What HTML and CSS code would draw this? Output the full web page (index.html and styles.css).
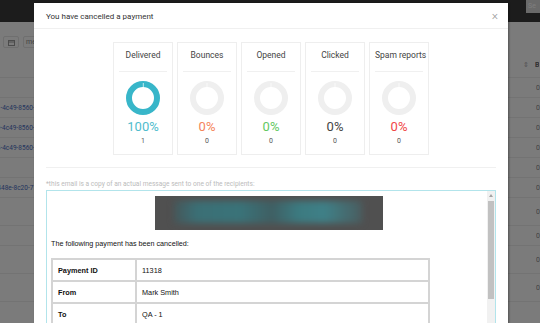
FILE: index.html
```html
<!DOCTYPE html>
<html lang="en">
<head>
<meta charset="UTF-8">
<title>Payment cancelled</title>
<link rel="stylesheet" href="styles.css">
</head>
<body>
<div class="page">
  <div class="topbar"><span class="topbar-btn">Se</span></div>
  <div class="toolbar">
    <span class="tool-btn">
      <svg width="7" height="7" viewBox="0 0 7 7"><rect x="0.5" y="1.5" width="6" height="5" fill="none" stroke="#999" stroke-width="1"/><line x1="0.5" y1="3" x2="6.5" y2="3" stroke="#999"/></svg>
    </span>
    <span class="tool-btn wide">me</span>
  </div>
  <div class="list">
    <div class="list-head"><span class="sort">&#8661;</span><span class="head-b">B</span></div>
    <div class="list-row"><span class="id"></span><span class="num">0</span></div>
    <div class="list-row"><span class="id">b7e1-4c49-8560-9d3c</span><span class="num">0</span></div>
    <div class="list-row"><span class="id">c2a0-4c49-8560-1f7e</span><span class="num">0</span></div>
    <div class="list-row"><span class="id">e9d4-4c49-8560-3b2a</span><span class="num">0</span></div>
    <div class="list-row"><span class="id"></span><span class="num">0</span></div>
    <div class="list-row"><span class="id">f13-448e-8c20-77a1</span><span class="num">0</span></div>
    <div class="list-row tall"><span class="id"></span><span class="num">0</span></div>
    <div class="list-row"><span class="id"></span><span class="num">0</span></div>
    <div class="list-row tall"><span class="id"></span><span class="num">0</span></div>
    <div class="list-row tall"><span class="id"></span><span class="num">0</span></div>
  </div>
</div>
<div class="backdrop"></div>

<div class="modal">
  <div class="modal-header">
    <span class="modal-title">You have cancelled a payment</span>
    <span class="modal-close">&#215;</span>
  </div>
  <div class="modal-body">
    <div class="stats">
      <div class="stat">
        <div class="stat-title">Delivered</div>
        <svg class="donut" width="34" height="34" viewBox="0 0 34 34"><circle cx="17" cy="17" r="14" fill="none" stroke="#38b6c9" stroke-width="6"/><line x1="17.3" y1="2" x2="17.3" y2="7" stroke="#fff" stroke-width="0.7"/></svg>
        <div class="stat-pct teal">100%</div>
        <div class="stat-count">1</div>
      </div>
      <div class="stat">
        <div class="stat-title">Bounces</div>
        <svg class="donut" width="34" height="34" viewBox="0 0 34 34"><circle cx="17" cy="17" r="14" fill="none" stroke="#efefef" stroke-width="6"/><line x1="17" y1="2" x2="17" y2="7" stroke="#fff" stroke-width="0.7"/></svg>
        <div class="stat-pct orange">0%</div>
        <div class="stat-count">0</div>
      </div>
      <div class="stat">
        <div class="stat-title">Opened</div>
        <svg class="donut" width="34" height="34" viewBox="0 0 34 34"><circle cx="17" cy="17" r="14" fill="none" stroke="#efefef" stroke-width="6"/><line x1="17" y1="2" x2="17" y2="7" stroke="#fff" stroke-width="0.7"/></svg>
        <div class="stat-pct green">0%</div>
        <div class="stat-count">0</div>
      </div>
      <div class="stat">
        <div class="stat-title">Clicked</div>
        <svg class="donut" width="34" height="34" viewBox="0 0 34 34"><circle cx="17" cy="17" r="14" fill="none" stroke="#efefef" stroke-width="6"/><line x1="17" y1="2" x2="17" y2="7" stroke="#fff" stroke-width="0.7"/></svg>
        <div class="stat-pct dark">0%</div>
        <div class="stat-count">0</div>
      </div>
      <div class="stat">
        <div class="stat-title">Spam reports</div>
        <svg class="donut" width="34" height="34" viewBox="0 0 34 34"><circle cx="17" cy="17" r="14" fill="none" stroke="#efefef" stroke-width="6"/><line x1="17" y1="2" x2="17" y2="7" stroke="#fff" stroke-width="0.7"/></svg>
        <div class="stat-pct red">0%</div>
        <div class="stat-count">0</div>
      </div>
    </div>

    <div class="note">*this email is a copy of an actual message sent to one of the recipients:</div>

    <div class="email-frame">
      <div class="email-content">
        <div class="banner"><div class="banner-inner"></div></div>
        <p class="email-text">The following payment has been cancelled:</p>
        <table class="pay-table">
          <tr><th>Payment ID</th><td>11318</td></tr>
          <tr><th>From</th><td>Mark Smith</td></tr>
          <tr><th>To</th><td>QA - 1</td></tr>
        </table>
      </div>
      <div class="scrollbar">
        <div class="scroll-arrow"></div>
        <div class="scroll-thumb"></div>
      </div>
    </div>
  </div>
</div>
</body>
</html>
```

FILE: styles.css
```css
html, body {
margin: 0;
padding: 0;
}
body {
width: 540px;
height: 323px;
overflow: hidden;
position: relative;
font-family: Roboto, "Liberation Sans", sans-serif;
background: #fff;
}

/* page behind the dialog */
.page {
width: 540px;
height: 323px;
background: #fbfbfb;
}
.topbar {
height: 22px;
background: #393939;
display: flex;
justify-content: flex-end;
}
.topbar-btn {
width: 12px;
height: 13px;
background: #d8d8d8;
color: #fff;
font-size: 7px;
line-height: 13px;
padding-left: 2px;
overflow: hidden;
}
.toolbar {
display: flex;
gap: 4px;
padding: 14px 0 0 3px;
height: 11px;
}
.tool-btn {
width: 14px;
height: 10px;
border: 1px solid #e2e2e2;
border-radius: 2px;
display: flex;
align-items: center;
justify-content: center;
}
.tool-btn.wide {
width: 40px;
justify-content: flex-start;
padding-left: 2px;
font-size: 7px;
color: #888;
}
.list {
margin-top: 6px;
}
.list-head {
height: 24px;
border-bottom: 1px solid #eaeaea;
display: flex;
justify-content: flex-end;
align-items: center;
gap: 6px;
font-size: 7px;
color: #666;
padding-right: 1px;
}
.sort {
color: #aaa;
font-size: 7px;
}
.head-b {
font-weight: bold;
width: 4px;
overflow: hidden;
}
.list-row {
height: 19px;
border-bottom: 1px solid #eaeaea;
display: flex;
justify-content: space-between;
align-items: center;
font-size: 6.5px;
}
.list-row.tall {
height: 27px;
}
.id {
color: #4a6cc0;
margin-left: -14px;
white-space: nowrap;
}
.num {
color: #888;
width: 4px;
overflow: hidden;
font-size: 7px;
}
.backdrop {
position: absolute;
inset: 0;
background: rgba(0, 0, 0, 0.51);
}

/* dialog */
.modal {
position: absolute;
left: 34px;
top: 3px;
width: 474px;
height: 340px;
background: #fff;
box-shadow: 1px 0 2px rgba(0, 0, 0, 0.35);
}
.modal-header {
height: 25px;
border-bottom: 1px solid #f0f0f0;
display: flex;
align-items: center;
justify-content: space-between;
padding: 0 10px 0 12px;
}
.modal-title {
font-size: 8px;
color: #333;
margin-top: 1px;
}
.modal-close {
font-size: 12px;
color: #999;
font-weight: 300;
margin-top: 1px;
}
.modal-body {
padding: 13px 12px 0 12px;
}
.stats {
display: flex;
justify-content: center;
gap: 4px;
padding-bottom: 12px;
border-bottom: 1px solid #f0f0f0;
}
.stat {
width: 60px;
height: 113px;
box-sizing: border-box;
border: 1px solid #eee;
padding: 7px 5px 0 5px;
display: flex;
flex-direction: column;
align-items: center;
}
.stat-title {
align-self: stretch;
text-align: center;
font-size: 8.5px;
color: #444;
line-height: 10px;
padding-bottom: 11px;
border-bottom: 1px solid #f0f0f0;
white-space: nowrap;
}
.donut {
margin-top: 9px;
display: block;
}
.stat-pct {
margin-top: 5px;
font-size: 13px;
line-height: 14px;
}
.stat-count {
margin-top: 3px;
font-size: 7px;
line-height: 9px;
color: #555;
}
.teal { color: #4fbccd; }
.orange { color: #f5845a; }
.green { color: #62c862; }
.dark { color: #444; }
.red { color: #f04646; }

.note {
font-size: 6.6px;
color: #bbb;
line-height: 9px;
padding-top: 12px;
}
.email-frame {
margin-top: 1px;
height: 160px;
border: 1px solid #b2e4eb;
display: flex;
}
.email-content {
flex: 1;
padding: 5px 0 0 4px;
font-family: "Liberation Sans", Arial, sans-serif;
}
.banner {
width: 228px;
height: 34px;
background: #505050;
margin: 0 auto;
padding: 5px 0 0 19px;
box-sizing: border-box;
overflow: hidden;
}
.banner-inner {
width: 188px;
height: 22px;
background: linear-gradient(90deg, #46575a 0%, #3b6f75 12%, #3a7379 35%, #3f5f63 52%, #3c7a80 66%, #3f8087 80%, #4a5d60 100%);
filter: blur(3px);
}
.email-text {
margin: 9px 0 0 0;
font-size: 7.2px;
line-height: 10px;
color: #111;
}
.pay-table {
margin-top: 9px;
width: 379px;
border-collapse: separate;
border-spacing: 0;
border: 1px solid #d4d4d4;
font-size: 7.3px;
}
.pay-table th, .pay-table td {
border: 1px solid #d4d4d4;
height: 20px;
padding: 0 5px;
text-align: left;
color: #111;
}
.pay-table th {
width: 72px;
font-weight: bold;
}
.scrollbar {
width: 8px;
background: #f1f1f1;
display: flex;
flex-direction: column;
align-items: center;
}
.scroll-arrow {
width: 0;
height: 0;
border-left: 2px solid transparent;
border-right: 2px solid transparent;
border-bottom: 3px solid #a3a3a3;
margin-top: 3px;
}
.scroll-thumb {
width: 6px;
height: 98px;
background: #c1c1c1;
margin-top: 4px;
}
```
